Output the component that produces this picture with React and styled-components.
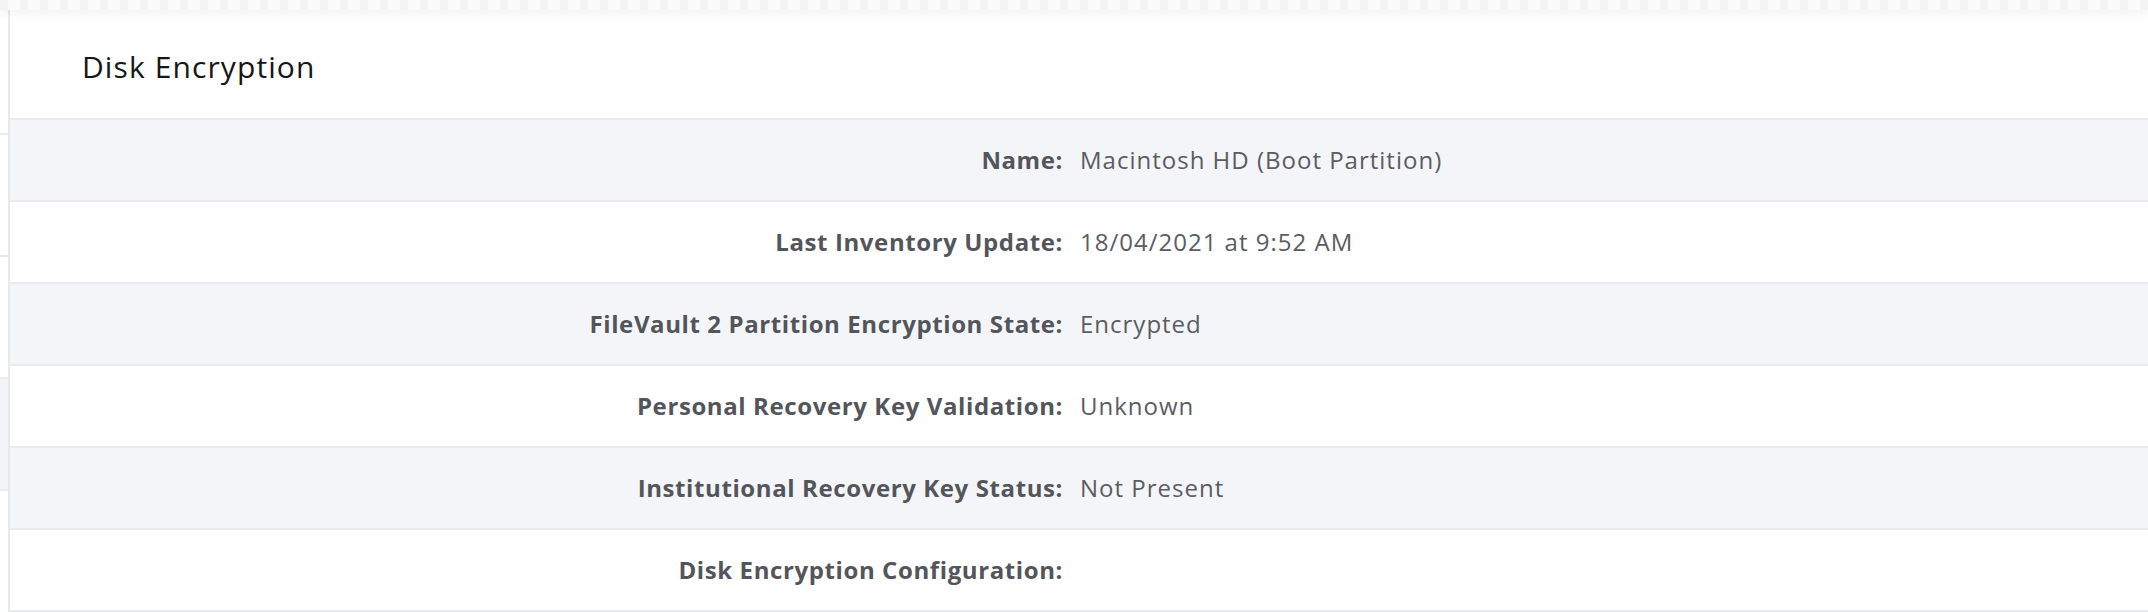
import React from "react";
import styled, { createGlobalStyle } from "styled-components";

const GlobalStyle = createGlobalStyle`
	body {
		margin: 0;
		background: #ffffff;
		font-family: "Open Sans", Lato, sans-serif;
	}
`;

const Page = styled.div`
	display: flex;
	flex-direction: column;
	width: 2148px;
	height: 612px;
	overflow: hidden;
`;

const TopBar = styled.div`
	height: 10px;
	flex-shrink: 0;
	background: repeating-linear-gradient(
		90deg,
		#f3f3f4 0px,
		#f3f3f4 8px,
		#fbfbfb 8px,
		#fbfbfb 20px
	);
	box-shadow: 0 4px 10px rgba(0, 0, 0, 0.05);
	position: relative;
	z-index: 2;
`;

const Body = styled.div`
	display: flex;
	flex: 1;
	min-height: 0;
`;

const Sidebar = styled.div`
	width: 8px;
	flex-shrink: 0;
	display: flex;
	flex-direction: column;
	border-right: 2px solid #e8e9ec;
`;

const SideItem = styled.div`
	height: ${p => p.h}px;
	flex-shrink: 0;
	background: ${p => (p.active ? "#f3f4f8" : "#ffffff")};
	border-bottom: 2px solid #eaebee;
`;

const Card = styled.div`
	flex: 1;
	display: flex;
	flex-direction: column;
	background: #ffffff;
`;

const Header = styled.div`
	height: 110px;
	flex-shrink: 0;
	display: flex;
	align-items: center;
	padding: 4px 0 0 72px;
	box-sizing: border-box;
	border-bottom: 2px solid #e9eaee;
`;

const Title = styled.h2`
	margin: 0;
	font-family: "Open Sans", Lato, sans-serif;
	font-weight: 400;
	font-size: 30px;
	letter-spacing: 1.1px;
	color: #161616;
`;

const Row = styled.div`
	display: grid;
	grid-template-columns: 1053px 1fr;
	column-gap: 17px;
	align-items: center;
	height: 82px;
	padding-bottom: 2px;
	flex-shrink: 0;
	box-sizing: border-box;
	border-bottom: 2px solid #e9eaee;
	background: ${p => (p.shaded ? "#f4f5f9" : "#ffffff")};
`;

const Label = styled.div`
	text-align: right;
	font-weight: 700;
	font-size: 24px;
	letter-spacing: 0.6px;
	color: #53555b;
`;

const Value = styled.div`
	font-weight: 400;
	font-size: 24px;
	letter-spacing: 1px;
	color: #5a5c62;
`;

const rows = [
	["Name:", "Macintosh HD (Boot Partition)"],
	["Last Inventory Update:", "18/04/2021 at 9:52 AM"],
	["FileVault 2 Partition Encryption State:", "Encrypted"],
	["Personal Recovery Key Validation:", "Unknown"],
	["Institutional Recovery Key Status:", "Not Present"],
	["Disk Encryption Configuration:", ""]
];

const App = () => {
	return (
		<Page>
			<GlobalStyle />
			<TopBar />
			<Body>
				<Sidebar>
					<SideItem h={123} />
					<SideItem h={120} />
					<SideItem h={120} />
					<SideItem h={110} active />
				</Sidebar>
				<Card>
					<Header>
						<Title>Disk Encryption</Title>
					</Header>
					{rows.map(([label, value], i) => (
						<Row key={label} shaded={i % 2 === 0}>
							<Label>{label}</Label>
							<Value>{value}</Value>
						</Row>
					))}
				</Card>
			</Body>
		</Page>
	);
};

export default App;
